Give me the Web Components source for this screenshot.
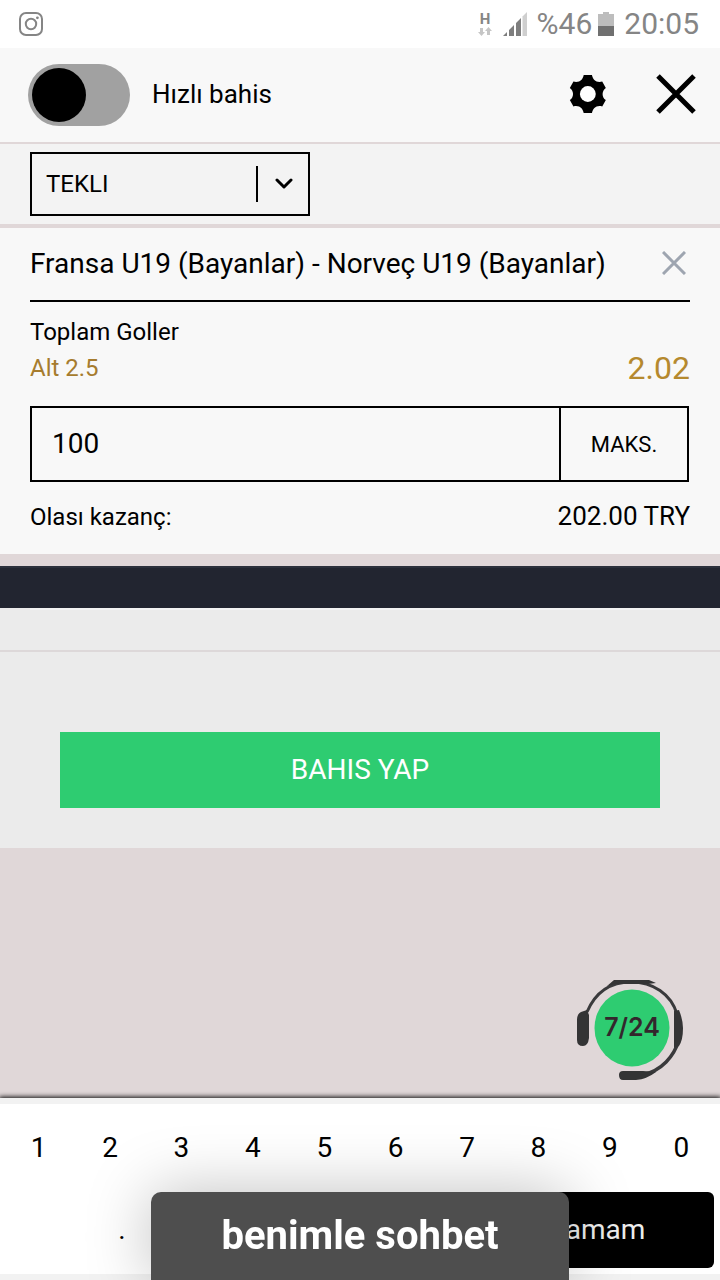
<!DOCTYPE html>
<html lang="tr">
<head>
<meta charset="utf-8">
<meta name="viewport" content="width=device-width, initial-scale=1">
<title>Kupon</title>
<style>
body { margin: 0; background: #e0d7d8; color: #000; font-family: Roboto, "Liberation Sans", sans-serif; }
</style>
</head>
<body>
<bet-app></bet-app>
<script>
const BASE = `*, *::before { box-sizing: border-box; }
  button, input, select { font: inherit; color: inherit; margin: 0; padding: 0; border: 0; background: none; border-radius: 0; }
  button { cursor: pointer; padding-bottom: 2px; } svg { display: block; flex: none; }`;

function define(name, css, html) {
  const template = document.createElement('template');
  template.innerHTML = `<style>${BASE}${css}</style>${html}`;
  customElements.define(name, class extends HTMLElement {
    constructor() {
      super();
      this.attachShadow({ mode: 'open' }).append(template.content.cloneNode(true));
    }
  });
}

define('status-bar', `
  :host { display: flex; align-items: center; justify-content: space-between; height: 48px; padding: 0 21px 0 19px; background: #fff; color: #858585; font-size: 30px; line-height: 48px; }
  .right { display: flex; align-items: center; }
  .net { margin-right: 10px; }
  .signal { margin-right: 10px; }
  .battery { margin: 0 10px 0 6px; }
`, `
  <svg width="24" height="24" viewBox="0 0 24 24" fill="none" stroke="#858585" stroke-width="2"><rect x="1" y="1" width="22" height="22" rx="6"/><circle cx="12" cy="12" r="5.2"/><circle cx="18.4" cy="5.8" r="1.4" fill="#858585" stroke="none"/></svg>
  <div class="right">
    <svg class="net" width="16" height="32" viewBox="0 0 16 32"><text x="8" y="16" text-anchor="middle" font-size="15" font-weight="700" fill="#858585">H</text><path fill="#c6c6c6" d="M3 20h3v4h2l-3.500 4L1 24h2zM10 27v-4H8l3.500-4L15 23h-2v4z"/></svg>
    <svg class="signal" width="24" height="24" viewBox="0 0 24 24"><path fill="#7e7e7e" d="M0 24l4-4v4zM6 18l5-5v11H6zM13 11l5-5v18h-5z"/><path fill="#cfcfcf" d="M19.500 4.500L24 0v24h-4.500z"/></svg>
    <span>%46</span>
    <svg class="battery" width="16" height="24" viewBox="0 0 16 24"><path fill="#bdbdbd" d="M0 2h5V0h6v2h5v12H0z"/><path fill="#707070" d="M0 14h16v10H0z"/></svg>
    <span>20:05</span>
  </div>`);

define('slip-header', `
  :host { display: flex; align-items: center; height: 96px; padding: 0 24px 0 28px; background: #f8f8f8; border-bottom: 2px solid #e0d7d8; font-size: 26px; line-height: 36px; }
  label { display: flex; align-items: center; gap: 22px; margin-right: auto; }
  label span { padding-bottom: 2px; }
  input { appearance: none; width: 102px; height: 62px; padding: 4px; border-radius: 31px; background: #a1a1a1; }
  input::before { content: ""; display: block; width: 54px; height: 54px; border-radius: 50%; background: #000; }
  input:checked::before { margin-left: auto; }
  button + button { margin-left: 49px; }
`, `
  <label><input type="checkbox" role="switch"><span>Hızlı bahis</span></label>
  <button aria-label="Ayarlar"><svg width="38" height="38" viewBox="387 226 114 115"><path d="M431 226H456C459 240 468 250 487 246L498 265C485 274 485 293 498 302L487 321C468 317 459 327 456 341H431C428 327 419 317 400 321L389 302C402 293 402 274 389 265L400 246C419 250 428 240 431 226Z"/><circle cx="443.500" cy="283.500" r="24" fill="#fff"/></svg></button>
  <button aria-label="Kapat"><svg width="40" height="40" viewBox="0 0 40 40" stroke="#000" stroke-width="5"><path d="M2 2L38 38M38 2L2 38"/></svg></button>`);

define('bet-type', `
  :host { display: block; padding: 8px 30px; background: #f3f3f3; border-bottom: 4px solid #e0d7d8; font-size: 24px; }
  .field { display: grid; align-items: center; width: min(280px, 100%); }
  .field > * { grid-area: 1 / 1; }
  select { appearance: none; width: 100%; height: 64px; padding: 0 60px 0 14px; border: 2px solid #000; }
  .mark { display: flex; align-items: center; justify-self: end; gap: 16px; padding-right: 16px; height: 36px; pointer-events: none; }
  .mark::before { content: ""; width: 2px; height: 36px; background: #000; }
`, `
  <div class="field">
    <select aria-label="Bahis tipi"><option>TEKLI</option></select>
    <span class="mark"><svg width="20" height="12" viewBox="0 0 20 12" fill="none" stroke="#000" stroke-width="3" stroke-linecap="round" stroke-linejoin="round"><path d="M3 2l7 7 7-7"/></svg></span>
  </div>`);

define('bet-card', `
  :host { display: block; padding: 0 30px 20px; background: #f8f8f8; font-size: 24px; line-height: 36px; }
  .title { display: flex; align-items: center; justify-content: space-between; padding-right: 4px; height: 74px; border-bottom: 2px solid #000; font-size: 28px; }
  .title ::slotted(*) { min-width: 0; }
  .market { padding-top: 12px; }
  .row { display: flex; align-items: center; justify-content: space-between; height: 36px; }
  .row.total { align-items: baseline; }
  .pick { color: #a67c2e; }
  .odds { color: #b5892e; font-size: 32px; }
  .stake { display: flex; height: 76px; margin: 20px 1px 16px 0; border: 2px solid #000; }
  .stake input { flex: 1; min-width: 0; padding: 0 20px; font-size: 28px; outline: 0; }
  .stake button { width: 128px; padding: 2px 0 0; border-left: 2px solid #000; font-size: 22px; }
  .sum { font-size: 26px; }
`, `
  <div class="title"><slot name="match"></slot><button aria-label="Sil"><svg width="24" height="24" viewBox="0 0 24 24" stroke="#9ea5b0" stroke-width="3"><path d="M1 1L23 23M23 1L1 23"/></svg></button></div>
  <div class="market"><slot name="market"></slot></div>
  <div class="row"><span class="pick"><slot name="pick"></slot></span><span class="odds"><slot name="odds"></slot></span></div>
  <div class="stake"><input type="text" inputmode="decimal" value="100" aria-label="Bahis tutarı"><button>MAKS.</button></div>
  <div class="row total"><span>Olası kazanç:</span><span class="sum"><slot name="win"></slot></span></div>`);

define('place-bet', `
  :host { display: block; margin-top: 12px; background: #ebebeb; }
  .bar { height: 42px; background: #222530; border-top: 2px solid #2c303c; }
  .note { height: 44px; border-bottom: 2px solid #ddd8d9; }
  .note::before { content: ""; display: block; height: 2px; margin: 0 30px; background: #f3f3f3; }
  .action { padding: 80px 60px 40px; }
  button { display: block; width: 100%; height: 76px; background: #2ecc71; color: #fff; font-size: 28px; }
`, `<div class="bar"></div><div class="note"></div><div class="action"><button>BAHIS YAP</button></div>`);

define('support-badge', `
  :host { display: flex; flex: 1; align-items: flex-end; justify-content: flex-end; padding: 16px 36px 18px; }
  a { display: block; color: #33262c; }
`, `
  <a href="#destek" aria-label="7/24 destek"><svg width="108" height="102" viewBox="0 0 108 102">
    <ellipse cx="56" cy="50" rx="37.500" ry="38.500" fill="#2ecc71"/>
    <g fill="none" stroke="#3a3a3c"><path stroke-width="3" d="M11 34C20 13 36 4 55 4C77 4 95 16 101 36"/><path stroke-width="3.500" d="M103 62C98 78 86 93 66 97"/></g>
    <path fill="#343435" d="M38 2H73L80 5L72 6H40L31 8zM5 34L11 32L13 37V60Q12 68 7 68Q1 68 1 62V42Q1 36 5 34zM98 33L103 32Q107 42 107 50Q107 62 103 68L98 70zM47 93H67L80 94Q71 101 60 102H47Q43 102 43 97Q43 93 47 93z"/>
    <text x="56" y="58" text-anchor="middle" font-family="Inter, sans-serif" font-size="25" font-weight="600" fill="currentColor">7/24</text>
  </svg></a>`);

define('number-pad', `
  :host { display: block; padding: 6px 0; background: #f2f2f2; box-shadow: 0 0 5px 1px #000; font-size: 28px; }
  .keys { padding: 0 3px 6px; background: #fff; }
  .digits { display: grid; grid-template-columns: repeat(10, 1fr); }
  .digits button { height: 88px; }
  .last { display: grid; grid-template-columns: repeat(3, 1fr); height: 76px; }
  .done { grid-column: 3; margin: 0 3px; border-radius: 6px; background: #000; color: #ededed; }
`, `
  <div class="keys">
    <div class="digits">${[1, 2, 3, 4, 5, 6, 7, 8, 9, 0].map(n => `<button>${n}</button>`).join('')}</div>
    <div class="last"><button>.</button><button class="done">Tamam</button></div>
  </div>`);

define('chat-tab', `
  :host { position: fixed; bottom: 0; left: 21%; right: 21%; }
  button { display: block; width: 100%; height: 88px; border-radius: 10px 10px 0 0; background: #4e4e4e; color: #fff; font-size: 40px; font-weight: 700; box-shadow: 0 0 64px rgba(0, 0, 0, .25); }
`, `<button><slot></slot></button>`);

define('bet-app', `
  :host { display: flex; flex-direction: column; min-height: 100vh; }
`, `
  <status-bar></status-bar>
  <slip-header></slip-header>
  <bet-type></bet-type>
  <bet-card>
    <span slot="match">Fransa U19 (Bayanlar) - Norveç U19 (Bayanlar)</span>
    <span slot="market">Toplam Goller</span>
    <span slot="pick">Alt 2.5</span>
    <span slot="odds">2.02</span>
    <span slot="win">202.00 TRY</span>
  </bet-card>
  <place-bet></place-bet>
  <support-badge></support-badge>
  <number-pad></number-pad>
  <chat-tab>benimle sohbet</chat-tab>`);
</script>
</body>
</html>
